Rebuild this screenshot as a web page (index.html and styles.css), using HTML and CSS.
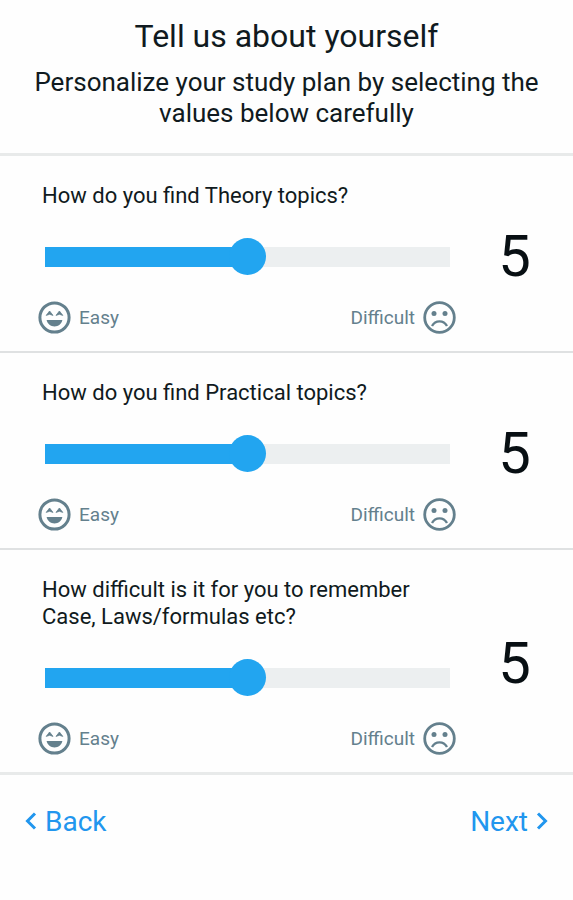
FILE: index.html
```
<!DOCTYPE html>
<html lang="en">
<head>
    <meta charset="UTF-8">
    <meta name="viewport" content="width=device-width, initial-scale=1.0">
    <title>Tell us about yourself</title>
    <link rel="stylesheet" href="styles.css">
</head>
<body>
    <!-- face icons used under every slider -->
    <svg class="icon-defs" aria-hidden="true">
        <symbol id="face-happy" viewBox="0 0 33 33">
            <circle cx="16.5" cy="16.5" r="14.6" fill="none" stroke="currentColor" stroke-width="3"/>
            <path d="M8.2 14.4 L11.6 10 L15 14.4 L11.6 13.3 Z M18 14.4 L21.4 10 L24.8 14.4 L21.4 13.3 Z" fill="currentColor" stroke="currentColor" stroke-width="0.8"/>
            <path d="M8.6 19 H24.4 C23.4 23 20.4 25.4 16.5 25.4 C12.6 25.4 9.6 23 8.6 19 Z" fill="currentColor"/>
        </symbol>
        <symbol id="face-sad" viewBox="0 0 33 33">
            <circle cx="16.5" cy="16.5" r="14.8" fill="none" stroke="currentColor" stroke-width="2.8"/>
            <circle cx="11" cy="12.6" r="2.5" fill="currentColor"/>
            <circle cx="22" cy="12.6" r="2.5" fill="currentColor"/>
            <path d="M9 25 C10.8 21.8 13.4 20.4 16.5 20.4 C19.6 20.4 22.2 21.8 24 25" fill="none" stroke="currentColor" stroke-width="2.4"/>
        </symbol>
    </svg>

    <form>
        <header class="header">
            <h1>Tell us about yourself</h1>
            <p>Personalize your study plan by selecting the values below carefully</p>
        </header>

        <div class="question">
            <div class="question-body">
                <label for="theory">How do you find Theory topics?</label>
                <input type="range" id="theory" name="theory" min="0" max="10" value="5">
                <div class="scale">
                    <span class="scale-end"><svg class="face"><use href="#face-happy"/></svg>Easy</span>
                    <span class="scale-end">Difficult<svg class="face"><use href="#face-sad"/></svg></span>
                </div>
            </div>
            <output class="value" for="theory">5</output>
        </div>

        <div class="question">
            <div class="question-body">
                <label for="practical">How do you find Practical topics?</label>
                <input type="range" id="practical" name="practical" min="0" max="10" value="5">
                <div class="scale">
                    <span class="scale-end"><svg class="face"><use href="#face-happy"/></svg>Easy</span>
                    <span class="scale-end">Difficult<svg class="face"><use href="#face-sad"/></svg></span>
                </div>
            </div>
            <output class="value" for="practical">5</output>
        </div>

        <div class="question">
            <div class="question-body">
                <label for="memory">How difficult is it for you to remember Case, Laws/formulas etc?</label>
                <input type="range" id="memory" name="memory" min="0" max="10" value="5">
                <div class="scale">
                    <span class="scale-end"><svg class="face"><use href="#face-happy"/></svg>Easy</span>
                    <span class="scale-end">Difficult<svg class="face"><use href="#face-sad"/></svg></span>
                </div>
            </div>
            <output class="value" for="memory">5</output>
        </div>

        <footer class="nav">
            <button type="button">
                <svg class="chevron" viewBox="0 0 12 18"><path d="M10 1.5 L2.5 9 L10 16.5"/></svg>
                Back
            </button>
            <button type="button">
                Next
                <svg class="chevron" viewBox="0 0 12 18"><path d="M2 1.5 L9.5 9 L2 16.5"/></svg>
            </button>
        </footer>
    </form>

    <script src="script.js"></script>
</body>
</html>
```
FILE: styles.css
```
* {
    box-sizing: border-box;
}
body {
    margin: 0;
    font-family: Roboto, sans-serif;
    background-color: #fefefe;
    color: #101a20;
}
.icon-defs {
    display: none;
}
.header {
    padding: 16px 32px 24px;
    text-align: center;
    border-bottom: 3px solid #e8eaea;
}
.header h1 {
    margin: 0 0 11px;
    font-size: 32px;
    font-weight: 400;
    line-height: 40px;
}
.header p {
    margin: 0;
    font-size: 26px;
    line-height: 31px;
}
.question {
    display: flex;
    align-items: center;
    padding-left: 38px;
    border-bottom: 2px solid #dfe1e2;
}
.question:last-of-type {
    border-bottom: 3px solid #e8eaea;
}
.question-body {
    flex: 1;
    padding: 26px 0 17px;
}
.question label {
    display: block;
    padding: 0 4px;
    font-size: 22px;
    line-height: 27px;
}
input[type="range"] {
    -webkit-appearance: none;
    appearance: none;
    display: block;
    width: calc(100% - 13px);
    height: 37px;
    margin: 29px 6px 26px 7px;
    background: linear-gradient(to right, #22a5f0 var(--fill, 50%), #eceff0 var(--fill, 50%)) center / 100% 20px no-repeat;
    cursor: pointer;
}
input[type="range"]::-webkit-slider-thumb {
    -webkit-appearance: none;
    width: 37px;
    height: 37px;
    border-radius: 50%;
    background-color: #22a5f0;
}
.scale {
    display: flex;
    justify-content: space-between;
    color: #64808d;
    font-size: 19px;
    line-height: 33px;
}
.scale-end {
    display: flex;
    align-items: center;
    gap: 8px;
}
.face {
    width: 33px;
    height: 33px;
}
.value {
    width: 117px;
    padding-top: 4px;
    font-size: 58px;
    line-height: 64px;
    text-align: center;
    color: #080f13;
}
.nav {
    display: flex;
    justify-content: space-between;
    padding: 28px 25px;
}
.nav button {
    display: flex;
    align-items: center;
    gap: 8px;
    padding: 0;
    border: none;
    background: none;
    font-family: inherit;
    font-size: 28px;
    line-height: 38px;
    color: #2196ee;
    cursor: pointer;
}
.chevron {
    width: 12px;
    height: 18px;
    margin-bottom: 3px;
    fill: none;
    stroke: currentColor;
    stroke-width: 3;
}
```
FILE: script.js
```
const sliders = document.querySelectorAll('input[type="range"]');

// keep the number and the blue part of the bar in step with the slider
sliders.forEach((slider) => {
    slider.addEventListener('input', () => {
        const output = document.querySelector('output[for="' + slider.id + '"]');
        output.textContent = slider.value;
        slider.style.setProperty('--fill', slider.value * 10 + '%');
    });
});
```
